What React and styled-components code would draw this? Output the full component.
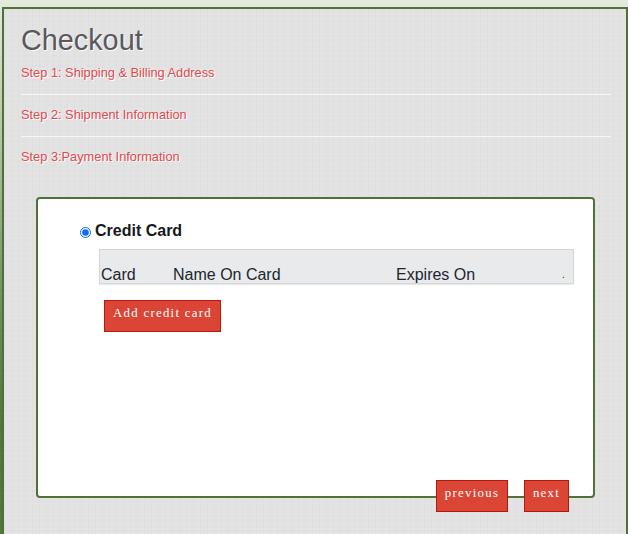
import styled, { createGlobalStyle } from "styled-components";

const GlobalStyle = createGlobalStyle`
    html, body {
        margin: 0;
        padding: 0;
        height: 534px;
        overflow: hidden;
    }
    body {
        background: linear-gradient(to bottom, #e4e9dd 0, #a9bd9c 160px, #6f9060 300px, #4f7a3a 420px);
        font-family: "Liberation Sans", Arial, sans-serif;
    }
`

const Frame = styled.div`
    box-sizing: border-box;
    height: 527px;
    margin: 7px 0 0 2px;
    padding: 14px 15px 0 17px;
    border-top: 2px solid #4f7238;
    border-left: 2px solid #4f7238;
    border-right: 2px solid #4f7238;
    background-color: #e2e2e2;
    background-image:
        repeating-linear-gradient(0deg, rgba(255,255,255,0.09) 0 1px, transparent 1px 5px),
        repeating-linear-gradient(90deg, rgba(0,0,0,0.015) 0 1px, transparent 1px 7px);
`

const Title = styled.h1`
    margin: 0;
    height: 30px;
    font-size: 28.8px;
    line-height: 34px;
    font-weight: 400;
    color: #59595b;
    text-shadow: 1px 1px 1px #fff;
`

const Step = styled.div`
    height: 42px;
    box-sizing: border-box;
    padding-top: 12px;
    font-size: 12.8px;
    line-height: 16px;
    color: #e5484d;
    text-shadow: 1px 1px 0 #fff;
    border-bottom: ${({last}) => (last ? 'none' : '1px solid #f7f7f7')};
`

const Panel = styled.div`
    box-sizing: border-box;
    display: flex;
    flex-direction: column;
    width: 559px;
    height: 301px;
    margin: 18px 0 0 15px;
    padding: 22px 0 0 42px;
    background: #fff;
    border: 2px solid #4f7238;
    border-radius: 4px;
`

const RadioRow = styled.label`
    display: flex;
    align-items: center;
    height: 20px;
    font-size: 16px;
    font-weight: 700;
    color: #16181b;
`

const Radio = styled.input`
    width: 11px;
    height: 11px;
    margin: 2px 4px 0 0;
    accent-color: #0a6cff;
`

const CardTable = styled.div`
    box-sizing: border-box;
    display: grid;
    grid-template-columns: 72px 223px 166px 1fr;
    align-items: end;
    width: 475px;
    height: 35px;
    margin: 8px 0 0 19px;
    padding: 0 0 0 1px;
    background: #e9eaec;
    border: 1px solid #d6d6d6;
    box-shadow: 0 1px 1px rgba(0,0,0,0.08);
    font-size: 16px;
    line-height: 16px;
    color: #20262c;
`

const Cell = styled.div`
    white-space: nowrap;
`

const Dot = styled(Cell)`
    font-size: 10px;
`

const Button = styled.button`
    box-sizing: border-box;
    height: 32px;
    width: ${({width}) => width}px;
    padding: 0 0 5px 0;
    background: #db4535;
    border: 1px solid #b5190a;
    border-radius: 0;
    color: #fff;
    font-family: "Liberation Serif", "Times New Roman", serif;
    font-size: 12.8px;
    letter-spacing: 1.28px;
    cursor: pointer;
`

const AddButton = styled(Button)`
    margin: 16px 0 0 24px;
`

const Footer = styled.div`
    display: flex;
    justify-content: flex-end;
    gap: 16px;
    margin-top: auto;
    margin-bottom: -16px;
    padding-right: 24px;
`

export default function App() {
    return (
        <>
            <GlobalStyle />
            <Frame>
                <Title>Checkout</Title>
                <Step>Step 1: Shipping &amp; Billing Address</Step>
                <Step>Step 2: Shipment Information</Step>
                <Step last>Step 3:Payment Information</Step>
                <Panel>
                    <RadioRow>
                        <Radio type="radio" name="pay" defaultChecked />
                        Credit Card
                    </RadioRow>
                    <CardTable>
                        <Cell>Card</Cell>
                        <Cell>Name On Card</Cell>
                        <Cell>Expires On</Cell>
                        <Dot>.</Dot>
                    </CardTable>
                    <AddButton width={117}>Add credit card</AddButton>
                    <Footer>
                        <Button width={72}>previous</Button>
                        <Button width={45}>next</Button>
                    </Footer>
                </Panel>
            </Frame>
        </>
    )
}
